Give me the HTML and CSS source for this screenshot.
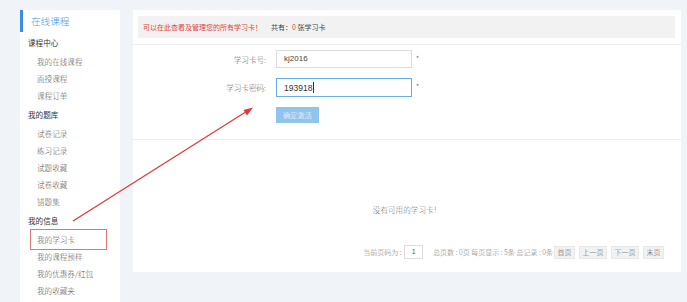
FILE: index.html
```html
<!DOCTYPE html>
<html lang="zh-CN">
<head>
<meta charset="utf-8">
<title>我的学习卡</title>
<link rel="stylesheet" href="styles.css">
</head>
<body>
<div class="page">
  <aside class="sidebar">
    <div class="side-title">在线课程</div>
    <div class="side-head">课程中心</div>
    <a class="side-item">我的在线课程</a>
    <a class="side-item">面授课程</a>
    <a class="side-item">课程订单</a>
    <div class="side-head">我的题库</div>
    <a class="side-item">试卷记录</a>
    <a class="side-item">练习记录</a>
    <a class="side-item">试题收藏</a>
    <a class="side-item">试卷收藏</a>
    <a class="side-item">错题集</a>
    <div class="side-head">我的信息</div>
    <a class="side-item">我的学习卡</a>
    <a class="side-item">我的课程预样</a>
    <a class="side-item">我的优惠券/红包</a>
    <a class="side-item">我的收藏夹</a>
  </aside>
  <main class="main">
    <section class="notice-wrap">
      <div class="notice">
        <span class="notice-red">可以在此查看及管理您的所有学习卡！</span>
        <span class="notice-count">共有：<em>0</em> 张学习卡</span>
      </div>
    </section>
    <section class="form">
      <div class="row">
        <span class="label">学习卡号:</span>
        <div class="input">kj2016</div>
        <span class="req">*</span>
      </div>
      <div class="row">
        <span class="label">学习卡密码:</span>
        <div class="input focus">193918<i class="caret"></i></div>
        <span class="req">*</span>
      </div>
      <div class="row">
        <span class="label"></span>
        <button class="btn">确定激活</button>
      </div>
    </section>
    <section class="list">
      <div class="empty">没有可用的学习卡！</div>
      <div class="pager">
        <span class="pg-text">当前页码为 : </span>
        <span class="pg-input">1</span>
        <span class="pg-info">总页数 : 0页 每页显示 : 5条 总记录 : 0条</span>
        <span class="pg-btn">首页</span>
        <span class="pg-btn">上一页</span>
        <span class="pg-btn">下一页</span>
        <span class="pg-btn">末页</span>
      </div>
    </section>
  </main>
</div>
<div class="annot-box"></div>
<svg class="annot-arrow" width="687" height="302" viewBox="0 0 687 302">
  <line x1="73" y1="221" x2="248" y2="110.5" stroke="#e0393b" stroke-width="1.3"/>
  <polygon points="253,107.5 243.5,110 247,115.5" fill="#e0393b"/>
</svg>
</body>
</html>
```
FILE: styles.css
```css
* { box-sizing: border-box; }
html, body { margin: 0; padding: 0; }
body {
  background: #f0f3f7;
  font-family: "Noto Sans CJK SC", "Noto Sans", sans-serif;
  color: #333;
  width: 687px;
  height: 302px;
  overflow: hidden;
  position: relative;
}
.page {
  display: flex;
  align-items: flex-start;
  padding-top: 10px;
}
.sidebar {
  margin-left: 20px;
  width: 100px;
  height: 292px;
  background: #fff;
  display: flex;
  flex-direction: column;
}
.side-title {
  height: 22px;
  line-height: 22px;
  border-left: 3px solid #3a8ee0;
  padding-left: 8px;
  font-size: 9.6px;
  font-weight: 300;
  color: #4a9ae2;
}
.side-head {
  padding: 2px 0 2px 8px;
  line-height: 17px;
  font-size: 7.6px;
  color: #333;
}
.side-item {
  display: block;
  padding-left: 17px;
  line-height: 17px;
  font-size: 7.6px;
  font-weight: 300;
  color: #555;
}
.main {
  margin-left: 13px;
  width: 548px;
  height: 262px;
  background: #fff;
  display: flex;
  flex-direction: column;
}
.notice-wrap {
  padding: 6px 6px 6px 5px;
  border-bottom: 1px solid #f0f0f0;
}
.notice {
  height: 22px;
  background: #f2f2f2;
  display: flex;
  align-items: center;
  padding-left: 5px;
  font-size: 7px;
}
.notice-red { color: #e0453a; }
.notice-count { margin-left: 9px; color: #444; }
.notice-count em { font-style: normal; color: #e0453a; }
.form {
  padding: 5px 0 16px;
  border-bottom: 1px solid #eceff2;
}
.row {
  display: flex;
  align-items: center;
  margin-bottom: 10px;
}
.row:last-child { margin-bottom: 0; }
.label {
  width: 143px;
  padding-right: 10px;
  text-align: right;
  font-size: 7.6px;
  font-weight: 300;
  color: #666;
}
.input {
  width: 136px;
  height: 18px;
  border: 1px solid #dcdcdc;
  padding-left: 7px;
  font-size: 8px;
  line-height: 16px;
  color: #444;
  font-family: "Liberation Sans", sans-serif;
  display: flex;
  align-items: center;
}
.input.focus {
  height: 19px;
  border-color: #6aaee6;
  font-size: 8.5px;
  color: #333;
}
.caret {
  display: inline-block;
  width: 1px;
  height: 11px;
  background: #333;
  margin-left: 1px;
}
.req {
  color: #e0453a;
  font-size: 7px;
  margin-left: 4px;
  align-self: flex-start;
  margin-top: 3px;
}
.btn {
  width: 43px;
  height: 16px;
  border: 0;
  padding: 0;
  background: #8ec4ee;
  color: #fff;
  font-family: "Noto Sans CJK SC", sans-serif;
  font-size: 7.2px;
  font-weight: 300;
}
.list {
  flex: 1;
  display: flex;
  flex-direction: column;
}
.empty {
  padding-top: 64px;
  line-height: 12px;
  text-align: center;
  font-size: 7.6px;
  font-weight: 300;
  color: #777;
}
.pager {
  margin-top: 29px;
  display: flex;
  align-items: center;
  justify-content: flex-end;
  padding-right: 17px;
  font-size: 7px;
  font-weight: 300;
  color: #777;
  white-space: pre;
}
.pg-text { margin-right: 1px; }
.pg-input {
  width: 19px;
  height: 14px;
  border: 1px solid #ddd;
  text-align: center;
  line-height: 12px;
  font-family: "Liberation Sans", sans-serif;
  color: #555;
}
.pg-info { margin-left: 10px; }
.pg-btn {
  height: 13px;
  line-height: 11px;
  padding: 0 2.5px;
  margin-left: 4px;
  background: #f2f2f2;
  border: 1px solid #e8e8e8;
  color: #555;
}
.pg-info + .pg-btn { margin-left: 1px; }
.annot-box {
  position: absolute;
  left: 30px;
  top: 229px;
  width: 77px;
  height: 21px;
  border: 1px solid #e07a7a;
}
.annot-arrow {
  position: absolute;
  left: 0;
  top: 0;
  pointer-events: none;
}
```
